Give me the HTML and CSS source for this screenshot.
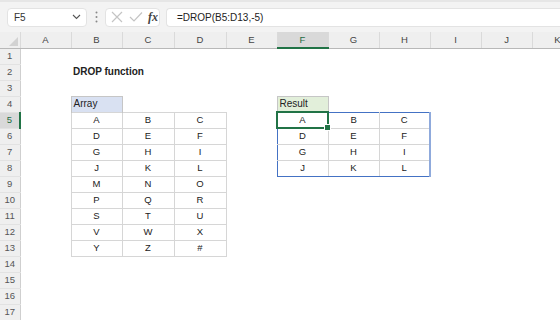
FILE: index.html
```html
<!DOCTYPE html>
<html lang="en">
<head>
  <meta charset="UTF-8">
  <title>DROP function</title>
  <link rel="stylesheet" href="styles.css">
</head>
<body>

  <!-- formula bar -->
  <div class="toolbar">
    <div class="namebox">
      <span>F5</span>
      <svg width="9" height="6" viewBox="0 0 9 6"><path d="M1 1 L4.5 4.5 L8 1" fill="none" stroke="#555" stroke-width="1.1"/></svg>
    </div>
    <svg class="grip" width="3" height="12" viewBox="0 0 3 12">
      <circle cx="1.5" cy="1.5" r="1" fill="#888"/>
      <circle cx="1.5" cy="6" r="1" fill="#888"/>
      <circle cx="1.5" cy="10.5" r="1" fill="#888"/>
    </svg>
    <div class="fxbox">
      <svg width="12" height="12" viewBox="0 0 12 12"><path d="M1 1 L11 11 M11 1 L1 11" stroke="#c4c4c4" stroke-width="1.2"/></svg>
      <svg width="14" height="12" viewBox="0 0 14 12"><path d="M1 6 L5 10 L13 1.5" fill="none" stroke="#c4c4c4" stroke-width="1.2"/></svg>
      <span class="fx">fx</span>
    </div>
    <div class="formula">=DROP(B5:D13,-5)</div>
  </div>

  <table class="sheet">
    <colgroup>
      <col class="rowhead-col">
      <col><col><col class="wide"><col class="wide"><col><col><col><col><col><col><col><col>
    </colgroup>
    <thead>
      <tr>
        <th class="corner"><span class="tri"></span></th>
        <th>A</th><th>B</th><th>C</th><th>D</th><th>E</th>
        <th class="sel">F</th><th>G</th><th>H</th><th>I</th><th>J</th><th>K</th><th>L</th>
      </tr>
    </thead>
    <tbody>
      <tr><th>1</th><td></td><td></td><td></td><td></td><td></td><td></td><td></td><td></td><td></td><td></td><td></td><td></td></tr>
      <tr><th>2</th><td></td><td class="title">DROP function</td><td></td><td></td><td></td><td></td><td></td><td></td><td></td><td></td><td></td><td></td></tr>
      <tr><th>3</th><td></td><td></td><td></td><td></td><td></td><td></td><td></td><td></td><td></td><td></td><td></td><td></td></tr>
      <tr><th>4</th><td></td><td class="hdr hdr-blue">Array</td><td></td><td></td><td></td><td class="hdr hdr-green">Result</td><td></td><td></td><td></td><td></td><td></td><td></td></tr>
      <tr><th class="sel">5</th><td></td><td class="a">A</td><td class="a">B</td><td class="a">C</td><td></td><td class="r rl rt active">A<span class="handle"></span></td><td class="r rt">B</td><td class="r rr rt">C</td><td></td><td></td><td></td><td></td></tr>
      <tr><th>6</th><td></td><td class="a">D</td><td class="a">E</td><td class="a">F</td><td></td><td class="r rl">D</td><td class="r">E</td><td class="r rr">F</td><td></td><td></td><td></td><td></td></tr>
      <tr><th>7</th><td></td><td class="a">G</td><td class="a">H</td><td class="a">I</td><td></td><td class="r rl">G</td><td class="r">H</td><td class="r rr">I</td><td></td><td></td><td></td><td></td></tr>
      <tr><th>8</th><td></td><td class="a">J</td><td class="a">K</td><td class="a">L</td><td></td><td class="r rl rb">J</td><td class="r rb">K</td><td class="r rr rb">L</td><td></td><td></td><td></td><td></td></tr>
      <tr><th>9</th><td></td><td class="a">M</td><td class="a">N</td><td class="a">O</td><td></td><td></td><td></td><td></td><td></td><td></td><td></td><td></td></tr>
      <tr><th>10</th><td></td><td class="a">P</td><td class="a">Q</td><td class="a">R</td><td></td><td></td><td></td><td></td><td></td><td></td><td></td><td></td></tr>
      <tr><th>11</th><td></td><td class="a">S</td><td class="a">T</td><td class="a">U</td><td></td><td></td><td></td><td></td><td></td><td></td><td></td><td></td></tr>
      <tr><th>12</th><td></td><td class="a">V</td><td class="a">W</td><td class="a">X</td><td></td><td></td><td></td><td></td><td></td><td></td><td></td><td></td></tr>
      <tr><th>13</th><td></td><td class="a">Y</td><td class="a">Z</td><td class="a">#</td><td></td><td></td><td></td><td></td><td></td><td></td><td></td><td></td></tr>
      <tr><th>14</th><td></td><td></td><td></td><td></td><td></td><td></td><td></td><td></td><td></td><td></td><td></td><td></td></tr>
      <tr><th>15</th><td></td><td></td><td></td><td></td><td></td><td></td><td></td><td></td><td></td><td></td><td></td><td></td></tr>
      <tr><th>16</th><td></td><td></td><td></td><td></td><td></td><td></td><td></td><td></td><td></td><td></td><td></td><td></td></tr>
      <tr><th>17</th><td></td><td></td><td></td><td></td><td></td><td></td><td></td><td></td><td></td><td></td><td></td><td></td></tr>
    </tbody>
  </table>

</body>
</html>
```

FILE: styles.css
```css
body {
  margin: 0;
  width: 560px;
  height: 320px;
  overflow: hidden;
  background-color: #ffffff;
  font-family: 'Liberation Sans', Arial, sans-serif;
  color: #222222;
}

/* formula bar */
.toolbar {
  display: flex;
  align-items: center;
  height: 32px;
  padding: 0 0 0 7px;
  background-color: #f3f3f3;
  border-top: 2px solid #e6e6e6;
  box-sizing: border-box;
}

.namebox {
  display: flex;
  align-items: center;
  justify-content: space-between;
  width: 80px;
  height: 19px;
  padding: 0 5px 0 6px;
  box-sizing: border-box;
  background-color: #ffffff;
  border: 1px solid #e3e3e3;
  border-radius: 4px;
  font-size: 10px;
  color: #333333;
}

.grip {
  margin: 0 7px 0 8px;
}

.fxbox {
  display: flex;
  align-items: center;
  gap: 6px;
  width: 55px;
  height: 19px;
  padding-left: 5px;
  box-sizing: border-box;
  background-color: #ffffff;
  border: 1px solid #e3e3e3;
  border-radius: 4px;
}

.fx {
  font-family: 'Liberation Serif', 'Times New Roman', serif;
  font-style: italic;
  font-weight: bold;
  font-size: 12px;
  color: #444444;
  margin-left: -1px;
}

.formula {
  flex: 1;
  height: 19px;
  margin-left: 6px;
  padding-left: 10px;
  box-sizing: border-box;
  background-color: #ffffff;
  border: 1px solid #e3e3e3;
  border-right: none;
  border-radius: 4px 0 0 4px;
  font-size: 10px;
  line-height: 17px;
  color: #222222;
}

/* grid */
.sheet {
  border-collapse: collapse;
  table-layout: fixed;
  width: 634px;
  font-size: 9.5px;
}

.sheet col {
  width: 51px;
}

.sheet col.wide {
  width: 52px;
}

.sheet col.rowhead-col {
  width: 20px;
}

.sheet tr {
  height: 16px;
}

.sheet td,
.sheet th {
  padding: 0;
  height: 1px;
  line-height: 12px;
}

.sheet td {
  text-align: center;
  white-space: nowrap;
  overflow: visible;
}

.sheet thead th {
  font-weight: normal;
  font-size: 9.5px;
  color: #444444;
  background-color: #efefef;
  border-left: 1px solid #dadada;
  border-bottom: 1px solid #b8b8b8;
}

.sheet thead th.sel {
  background-color: #d9d9d9;
  color: #1e6b42;
  border-bottom: 2px solid #217346;
}

.sheet th.corner {
  position: relative;
  border-left: none;
}

.tri {
  position: absolute;
  right: 2px;
  bottom: 2px;
  width: 0;
  height: 0;
  border-left: 9px solid transparent;
  border-bottom: 9px solid #d2d2d2;
}

.sheet tbody th {
  font-weight: normal;
  font-size: 9.5px;
  color: #555555;
  background-color: #efefef;
  border-right: 1px solid #cfcfcf;
  border-bottom: 1px solid #e2e2e2;
}

.sheet tbody th.sel {
  background-color: #d9d9d9;
  color: #1e6b42;
  border-right: 2px solid #217346;
}

/* cells */
.title {
  text-align: left !important;
  font-weight: bold;
  font-size: 10px;
  padding-left: 2px !important;
}

.hdr {
  text-align: left !important;
  padding-left: 2px !important;
  font-size: 10px;
  border: 1px solid #c6c6c6;
  border-bottom: none;
}

.hdr-blue {
  background-color: #d9e1f2;
}

.hdr-green {
  background-color: #e2efda;
}

.a {
  border: 1px solid #d6d6d6;
}

.r {
  border: 1px solid #d6d6d6;
}

.rl {
  border-left: 1px solid #4472c4;
}

.rr {
  border-right: 2px solid #8faadc;
}

.rt {
  border-top: 1px solid #4472c4;
}

.rb {
  border-bottom: 1px solid #4472c4;
}

.active {
  position: relative;
  border: 2px solid #217346;
}

.handle {
  position: absolute;
  right: -4px;
  bottom: -4px;
  width: 5px;
  height: 5px;
  background-color: #217346;
  border: 1px solid #ffffff;
}
```
